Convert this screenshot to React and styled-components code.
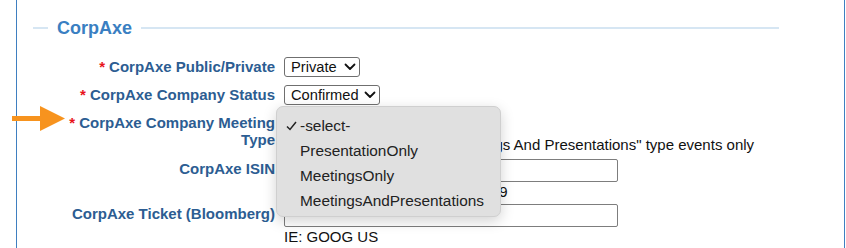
import React from "react";
import styled, { createGlobalStyle } from "styled-components";

const Global = createGlobalStyle`
  html, body {
    margin: 0;
    padding: 0;
    background: #ffffff;
    font-family: "Liberation Sans", Arial, Helvetica, sans-serif;
  }
`;

const Page = styled.div`
  position: relative;
  width: 846px;
  height: 248px;
  overflow: hidden;
`;

const Panel = styled.div`
  margin-left: 16px;
  width: 811px;
  height: 248px;
  border-left: 1px solid #3f7fc0;
  border-right: 1px solid #3f7fc0;
  padding: 17px 0 0 16px;
  box-sizing: content-box;
`;

const Legend = styled.div`
  display: flex;
  align-items: center;
  width: 746px;
  height: 22px;
`;

const Rule = styled.div`
  height: 2px;
  background: #d6e6f3;
  width: ${(p) => (p.$w ? p.$w + "px" : "auto")};
  flex: ${(p) => (p.$w ? "none" : 1)};
`;

const LegendText = styled.span`
  padding: 0 9px;
  font-size: 18px;
  font-weight: bold;
  color: #3a7fc2;
  line-height: 22px;
`;

const Rows = styled.div`
  margin: 18px 0 0 30px;
  display: flex;
  flex-direction: column;
`;

const Row = styled.div`
  display: grid;
  grid-template-columns: 212px 1fr;
  column-gap: 9px;
  align-items: start;
  padding-bottom: ${(p) => p.$pb}px;
`;

const Label = styled.div`
  text-align: right;
  font-size: 15px;
  font-weight: bold;
  line-height: 17px;
  padding-top: 1px;
  color: #2c5d92;
`;

const Star = styled.span`
  color: #e8141b;
  margin-right: 4px;
`;

const Field = styled.div`
  display: flex;
  flex-direction: column;
  align-items: flex-start;
`;

const SelectBox = styled.div`
  display: flex;
  align-items: center;
  justify-content: space-between;
  box-sizing: border-box;
  width: ${(p) => p.$w}px;
  height: 20px;
  padding: 0 3px 0 6px;
  border: 1px solid #6f6f6f;
  border-radius: 3px;
  background: #fff;
  font-size: 14.67px;
  color: #111;
`;

const TextInput = styled.input`
  box-sizing: border-box;
  width: 334px;
  height: 23px;
  border: 1px solid #7d7d7d;
  border-radius: 2px;
  margin: 0;
  padding: 0 4px;
  font-family: inherit;
  font-size: 14.67px;
`;

const Hint = styled.div`
  margin-top: ${(p) => p.$mt}px;
  font-size: 15px;
  line-height: 17px;
  color: #111;
  white-space: nowrap;
`;

const Arrow = styled.svg`
  position: absolute;
  left: 10px;
  top: 104px;
`;

const Menu = styled.ul`
  position: absolute;
  left: 276px;
  top: 106px;
  width: 225px;
  height: 111px;
  box-sizing: border-box;
  margin: 0;
  padding: 6px 0 0 0;
  list-style: none;
  background: #e0e0e0;
  border: 1px solid #cfcfcf;
  border-radius: 7px;
  box-shadow: 0 4px 14px rgba(0, 0, 0, 0.18);
`;

const MenuItem = styled.li`
  position: relative;
  height: 25px;
  line-height: 25px;
  padding-left: 23px;
  font-size: 15.4px;
  color: #222;
`;

const Check = styled.svg`
  position: absolute;
  left: 9px;
  top: 8px;
`;

function Chevron() {
  return (
    <svg width="12" height="8" viewBox="0 0 12 8">
      <polyline points="1.5,1.5 6,6 10.5,1.5" fill="none" stroke="#111" strokeWidth="1.8" strokeLinecap="round" strokeLinejoin="round" />
    </svg>
  );
}

function Select({ value, width }) {
  return (
    <SelectBox $w={width}>
      <span>{value}</span>
      <Chevron />
    </SelectBox>
  );
}

const options = ["-select-", "PresentationOnly", "MeetingsOnly", "MeetingsAndPresentations"];

export default function App() {
  return (
    <Page>
      <Global />
      <Panel>
        <Legend>
          <Rule $w={15} />
          <LegendText>CorpAxe</LegendText>
          <Rule />
        </Legend>
        <Rows>
          <Row $pb={8}>
            <Label><Star>*</Star>CorpAxe Public/Private</Label>
            <Field><Select value="Private" width={76} /></Field>
          </Row>
          <Row $pb={8}>
            <Label><Star>*</Star>CorpAxe Company Status</Label>
            <Field><Select value="Confirmed" width={96} /></Field>
          </Row>
          <Row $pb={6}>
            <Label><Star>*</Star>CorpAxe Company Meeting Type</Label>
            <Field>
              <Select value="-select-" width={80} />
              <Hint $mt={3}>This field is required for "Meetings And Presentations" type events only</Hint>
            </Field>
          </Row>
          <Row $pb={4}>
            <Label>CorpAxe ISIN</Label>
            <Field>
              <TextInput />
              <Hint $mt={1}>12 characters IE: US38259P5089</Hint>
            </Field>
          </Row>
          <Row $pb={0}>
            <Label>CorpAxe Ticket (Bloomberg)</Label>
            <Field>
              <TextInput />
              <Hint $mt={1}>IE: GOOG US</Hint>
            </Field>
          </Row>
        </Rows>
      </Panel>

      <Arrow width="58" height="30" viewBox="0 0 58 30">
        <rect x="2" y="12" width="31" height="5" fill="#f7931e" />
        <polygon points="30,2 55,14.5 30,27" fill="#f7931e" />
      </Arrow>

      <Menu>
        {options.map((o, i) => (
          <MenuItem key={o}>
            {i === 0 && (
              <Check width="11" height="10" viewBox="0 0 11 10">
                <polyline points="1,5.5 4,8.5 10,1" fill="none" stroke="#222" strokeWidth="1.5" />
              </Check>
            )}
            {o}
          </MenuItem>
        ))}
      </Menu>
    </Page>
  );
}
